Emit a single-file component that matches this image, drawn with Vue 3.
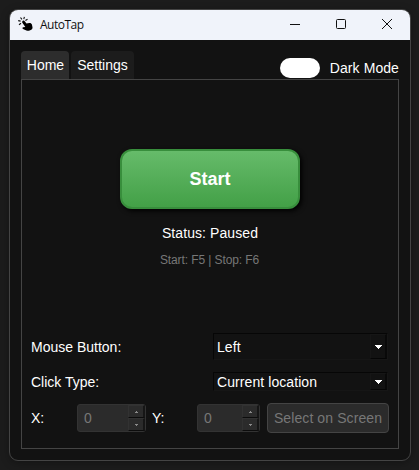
<script setup>
import { ref } from 'vue'

const tabs = ['Home', 'Settings']
const active = ref('Home')
const selects = [
  { label: 'Mouse Button:', value: 'Left', kind: 'tall' },
  { label: 'Click Type:', value: 'Current location', kind: 'short' },
]
const coords = ['X', 'Y']
</script>

<template>
  <div class="desktop">
    <div class="window">
      <header class="titlebar">
        <svg class="logo" width="16" height="16" viewBox="0 0 16 16">
          <path d="M4.600 4.900c.8-.6 1.600-.4 2.100.3l1.800 2.300 2.800-.5c1.300-.1 2.300.5 2.600 1.600l.6 2.700c.1 1.200-.3 1.900-1.200 2.500l-1.700.7c-1.200.5-2.200.3-3.200-.1L5 12.900c-.8-.4-.7-1.600.2-1.700l2.100-.1L4.400 6.800c-.4-.7-.4-1.400.2-1.900z" fill="#000" />
          <path d="M3 7.200L1 8.700M2.600 5.100L.2 4.600M3.900 3.400L2.500 1.500M5.800 3.100l.6-2.300M7.400 4.500l2.100-1.300" stroke="#111" stroke-width="1.100" fill="none" />
        </svg>
        <span class="title">AutoTap</span>
        <div class="controls">
          <svg width="12" height="12" viewBox="0 0 12 12"><path d="M1 6.500h10" /></svg>
          <svg width="12" height="12" viewBox="0 0 12 12"><rect x="1.500" y="1.500" width="9" height="9" rx="1" /></svg>
          <svg width="12" height="12" viewBox="0 0 12 12"><path d="M1 1l10 10M11 1L1 11" /></svg>
        </div>
      </header>

      <nav class="toolbar">
        <button
          v-for="tab in tabs"
          :key="tab"
          class="tab"
          :class="{ active: tab === active }"
          @click="active = tab"
        >{{ tab }}</button>
        <div class="mode"><span class="switch"></span><span class="mode-label">Dark Mode</span></div>
      </nav>

      <main class="panel">
        <section class="hero">
          <button class="start">Start</button>
          <div class="status">Status: Paused</div>
          <div class="hint">Start: F5 | Stop: F6</div>
        </section>

        <div v-for="s in selects" :key="s.label" class="row" :class="s.kind">
          <span class="label">{{ s.label }}</span>
          <div class="combo">
            <span class="value">{{ s.value }}</span>
            <span class="drop">
              <svg width="7" height="4" viewBox="0 0 7 4" shape-rendering="crispEdges"><path d="M0 0h7v1H6v1H5v1H4v1H3V3H2V2H1V1H0z" fill="#fff" /></svg>
            </span>
          </div>
        </div>

        <div class="coords">
          <template v-for="c in coords" :key="c">
            <span class="axis" :class="'axis-' + c.toLowerCase()">{{ c }}:</span>
            <div class="spin" :class="'spin-' + c.toLowerCase()">
              <span class="num">0</span>
              <span class="steps">
                <i><svg width="3" height="2" viewBox="0 0 3 2"><path d="M1 0h1v1h1v1H0V1h1z" fill="#8a8a8a" /></svg></i>
                <i><svg width="3" height="2" viewBox="0 0 3 2"><path d="M0 0h3v1H2v1H1V1H0z" fill="#8a8a8a" /></svg></i>
              </span>
            </div>
          </template>
          <button class="pick">Select on Screen</button>
        </div>
      </main>
    </div>
  </div>
</template>

<style>
body { margin: 0; background: #1c1c1c; }
</style>

<style scoped>
* { box-sizing: border-box; }
button { margin: 0; padding: 0; border: 0; font: inherit; color: inherit; }
.desktop {
  width: 419px;
  height: 470px;
  padding: 9px 8px 9px 9px;
  overflow: hidden;
  background: #1c1c1c;
  font: 14px/18px "Liberation Sans", Arial, sans-serif;
  color: #fff;
  white-space: nowrap;
}
.window {
  height: 452px;
  border: 1px solid #444;
  border-radius: 9px;
  background: #121212;
  overflow: hidden;
  box-shadow: 0 2px 8px rgba(0, 0, 0, 0.3);
}
.titlebar {
  display: flex;
  align-items: center;
  height: 30px;
  padding: 0 17px 0 8px;
  background: #f0f3fa;
  color: #111;
}
.logo { margin-top: -2px; }
.title { margin-left: 6px; font: 12px/16px "Open Sans", "Noto Sans", sans-serif; letter-spacing: -0.5px; }
.controls { display: flex; gap: 34px; margin-left: auto; margin-top: -2px; }
.controls svg { display: block; fill: none; stroke: #111; stroke-width: 1; }
.toolbar {
  display: flex;
  align-items: flex-end;
  gap: 2px;
  height: 39px;
  padding: 0 11px;
}
.tab {
  width: 63px;
  height: 28px;
  border-radius: 4px 4px 0 0;
  background: #1c1c1c;
}
.tab.active { width: 48px; padding-left: 1px; background: #2d2d2d; }
.mode { display: flex; align-items: center; gap: 10px; width: 119px; height: 20px; margin: 0 0 1px auto; }
.mode-label { letter-spacing: 0.08px; }
.switch { width: 40px; height: 20px; border-radius: 10px; background: #fff; }
.panel {
  height: 370px;
  margin: 0 11px;
  padding: 0 9px;
  border: 1px solid #444;
}
.hero {
  display: flex;
  flex-direction: column;
  align-items: center;
  height: 253px;
  padding-top: 69px;
}
.start {
  width: 180px;
  height: 60px;
  border: 2px solid #388e3c;
  border-radius: 12px;
  background: linear-gradient(#66bb6a, #43a047);
  box-shadow: 2px 2px 5px #000;
  font-size: 18px;
  font-weight: bold;
}
.status { margin-top: 15px; letter-spacing: 0.08px; }
.hint { margin-top: 9px; padding-right: 1px; font-size: 12px; letter-spacing: -0.1px; color: #777; }
.row { display: flex; align-items: center; justify-content: space-between; padding-right: 1px; }
.row.tall { height: 27px; }
.row.short { height: 19px; margin-top: 12px; }
.combo {
  display: flex;
  justify-content: space-between;
  align-items: center;
  width: 175px;
  height: 100%;
  padding-left: 3px;
  border: 1px solid #060606;
  border-right-color: #161616;
  border-bottom-color: #161616;
}
.value { letter-spacing: 0.08px; }
.drop {
  display: flex;
  align-items: center;
  justify-content: center;
  width: 17px;
  height: 100%;
  border: 1px solid #161616;
  border-right: 2px solid #090909;
  border-bottom: 1px solid #050505;
}
.coords { display: flex; align-items: center; height: 30px; margin-top: 12px; }
.axis-x { width: 46px; }
.axis-y { width: 45px; }
.spin {
  display: flex;
  height: 28px;
  width: 69px;
  padding-left: 6px;
  border: 1px solid #333;
  border-radius: 3px;
  background: #2b2b2b;
  color: #777;
}
.spin-x { margin-right: 6px; }
.spin-y { width: 63px; margin-right: 7px; }
.num { line-height: 26px; }
.steps {
  display: flex;
  flex-direction: column;
  width: 17px;
  margin-left: auto;
}
.steps i {
  display: flex;
  flex: 1;
  align-items: center;
  justify-content: center;
  border: 1px solid #323232;
  border-right: 2px solid #161616;
  border-bottom: 1px solid #0c0c0c;
}
.pick {
  width: 122px;
  height: 30px;
  border: 1px solid #444;
  border-radius: 4px;
  background: #2b2b2b;
  color: #777;
  letter-spacing: 0.1px;
}
</style>
